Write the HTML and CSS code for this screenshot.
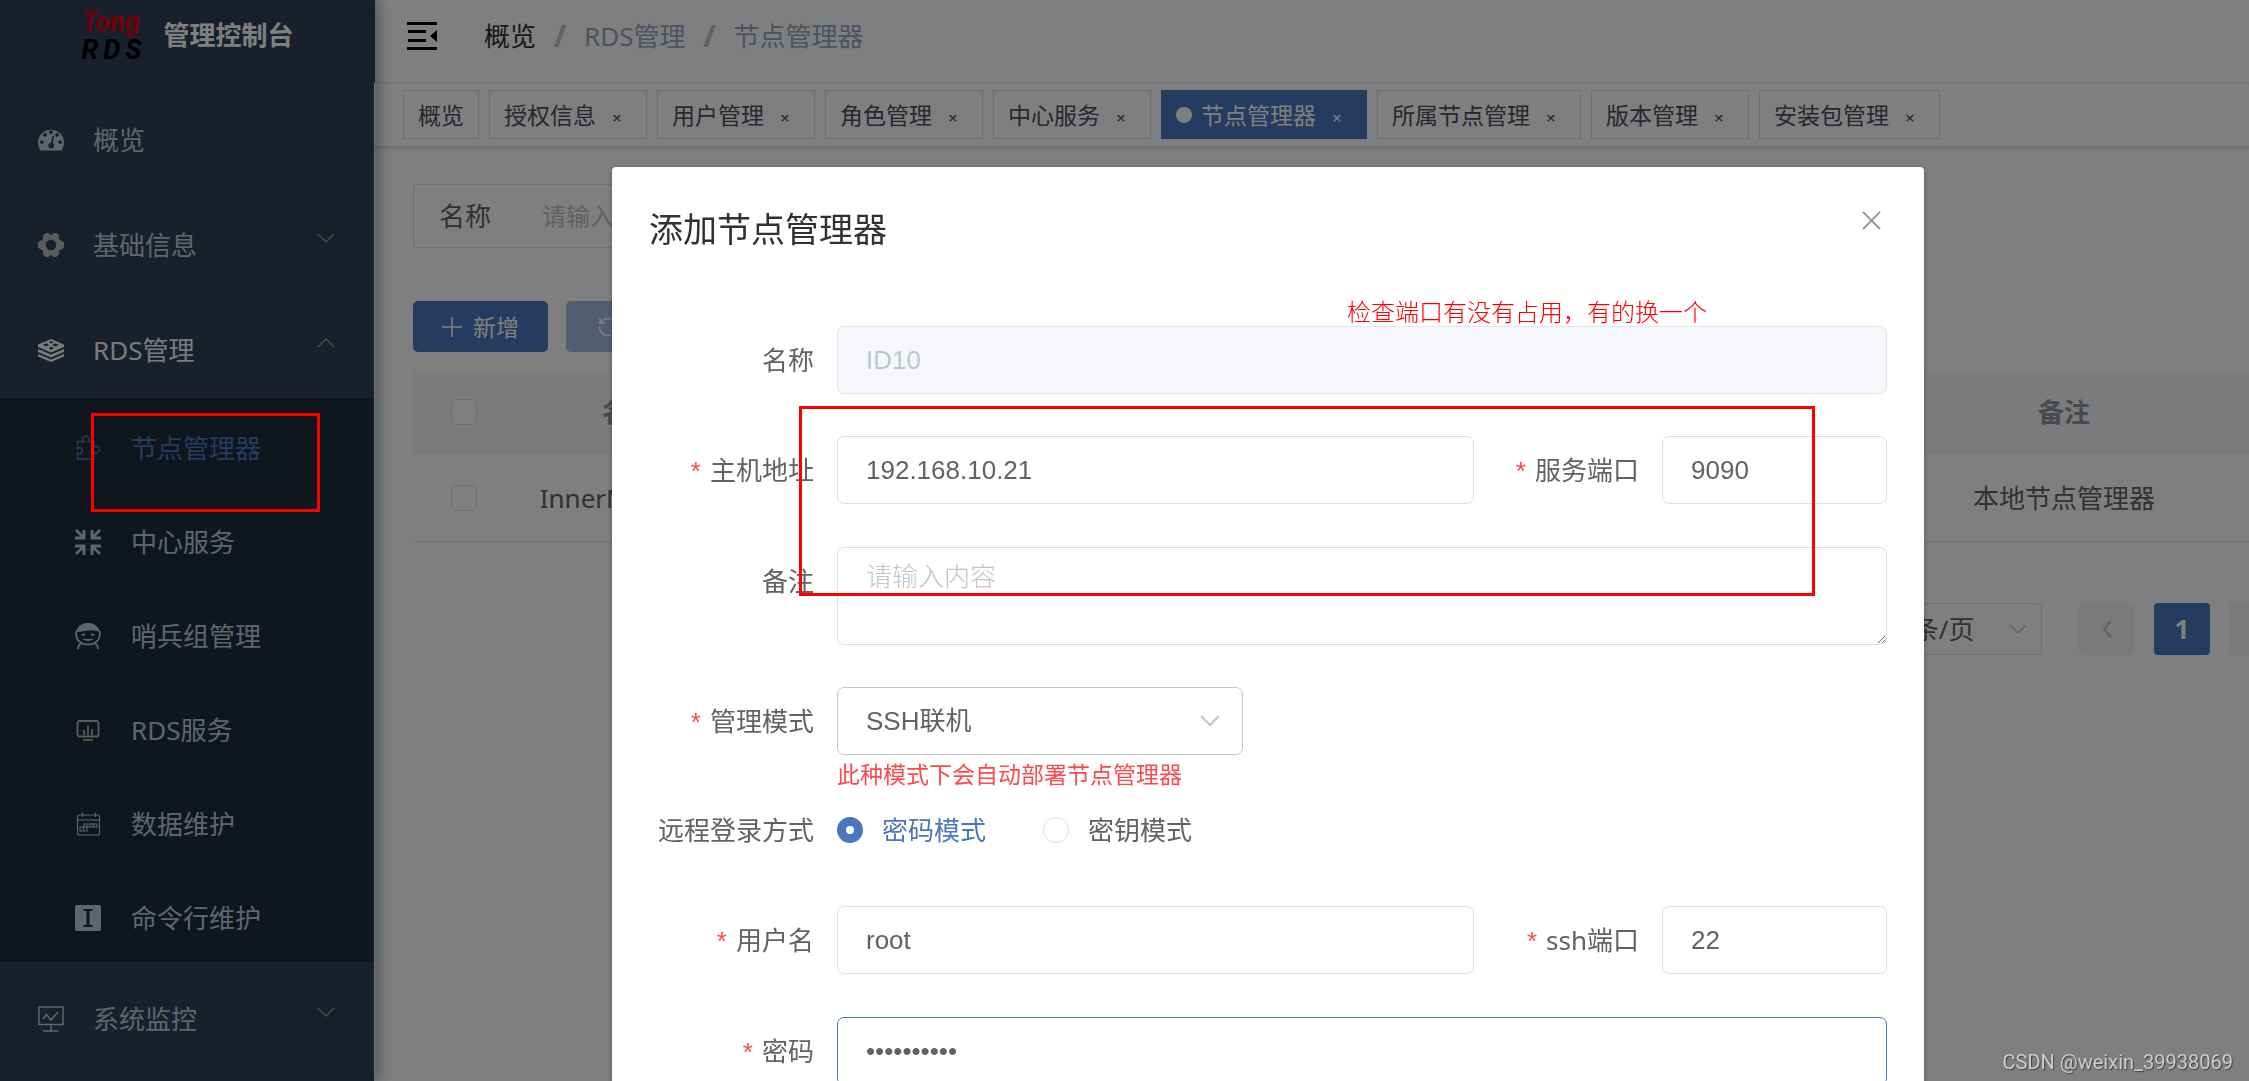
FILE: index.html
```html
<!DOCTYPE html>
<html lang="zh-CN">
<head>
<meta charset="utf-8">
<title>管理控制台 - 节点管理器</title>
<link rel="stylesheet" href="styles.css">
</head>
<body>
<div class="app">
  <aside class="sidebar">
    <div class="brand">
      <div class="logo"><span class="logo-top">Tong</span><span class="logo-bottom"><i>R</i><i>D</i><i>S</i></span></div>
      <h1 class="brand-title">管理控制台</h1>
    </div>
    <nav class="menu">
      <a class="menu-item" href="#">
        <svg class="icon" viewBox="0 0 26 26"><path fill="currentColor" fill-rule="evenodd" d="M2.600 23.500A13 13 0 1 1 23.400 23.500ZM13 3.200a1.900 1.900 0 1 0 .01 0ZM6.900 6a1.900 1.900 0 1 0 .01 0ZM19.100 6a1.900 1.900 0 1 0 .01 0ZM3.900 13.200a1.900 1.900 0 1 0 .01 0ZM22.100 13.200a1.900 1.900 0 1 0 .01 0ZM14.700 8.500l-1.800 7.200a3 3 0 1 0 2 .5l1.300-7.400Z"/></svg>
        <span class="menu-text">概览</span>
      </a>
      <a class="menu-item" href="#">
        <svg class="icon icon-gray" viewBox="0 0 26 26"><path fill="currentColor" stroke="currentColor" stroke-width="1" stroke-linejoin="round" fill-rule="evenodd" d="M7.500 1.500 10.500 1.500 13 3.500 15.500 1.500 18.500 1.500 20.500 3.500 20.700 7.500 25.500 10.500V15.500L20.700 18.500 20.500 22.500 18.500 24.500 15.500 24.500 13 22.500 10.500 24.500 7.500 24.500 5.500 22.500 5.300 18.500.5 15.500V10.500L5.300 7.500 5.500 3.500ZM13 7.300a5.700 5.700 0 1 0 .01 0Z"/></svg>
        <span class="menu-text">基础信息</span>
        <svg class="arrow" viewBox="0 0 18 10"><path d="M1 1 9 9 17 1"/></svg>
      </a>
      <a class="menu-item is-open" href="#">
        <svg class="icon" viewBox="0 0 26 26"><path fill="currentColor" fill-rule="evenodd" d="M13 2 26 7.500V10L13 15.500 0 10V7.500ZM12.500 4 11 5.600 13.500 6.400 15.800 5ZM8 6.600a2.600 1.200 0 1 0 .01 0ZM17 6.500l4 1.500-3.500 1.600-3.500-1.300ZM12 9.700l4.200 1-3 2-2-.8Z"/><path fill="currentColor" d="M0 12 13 17.500 26 12V15L13 20.500 0 15ZM0 17 13 22.500 26 17V19.500L13 25 0 19.500Z"/></svg>
        <span class="menu-text">RDS管理</span>
        <svg class="arrow" viewBox="0 0 18 10"><path d="M1 9 9 1 17 9"/></svg>
      </a>
      <div class="submenu">
        <a class="menu-item is-active" href="#">
          <svg class="icon" viewBox="0 0 26 26"><path fill="none" stroke="currentColor" stroke-width="1.400" d="M2.500 6.500H8.500a3.200 3.200 0 1 1 4.600 0H19V12a3.200 3.200 0 1 1 0 5V24H2.500V18a3 3 0 1 0 0-4.500Z"/></svg>
          <span class="menu-text">节点管理器</span>
        </a>
        <a class="menu-item" href="#">
          <svg class="icon" viewBox="0 0 26 26"><g fill="none" stroke="currentColor" stroke-width="2.800"><path d="M1 1 8 8M9 1V9H0M25 1 18 8M17 1V9H26M1 25 8 18M9 26V17H0M25 25 18 18M17 26V17H26"/></g></svg>
          <span class="menu-text">中心服务</span>
        </a>
        <a class="menu-item" href="#">
          <svg class="icon" viewBox="0 0 26 26"><path fill="currentColor" d="M1 9C3 2.500 7.500 0 13 0S23 2.500 25 9Q19 6.500 13 7.500T1 9Z"/><path fill="none" stroke="currentColor" stroke-width="1.800" d="M1.500 8C-.5 17 6 21.500 13 21.500S26.500 17 24.500 8M6 20.500Q3 22 3 26M20 20.500Q23 22 23 26M8.500 16Q13 18 17.500 16"/><path stroke="currentColor" stroke-width="2" d="M6.500 11.800H10M16 11.800H19.500"/></svg>
          <span class="menu-text">哨兵组管理</span>
        </a>
        <a class="menu-item" href="#">
          <svg class="icon icon-warm" viewBox="0 0 26 26"><rect x="2.500" y="4" width="21" height="15.500" rx="2" fill="none" stroke="currentColor" stroke-width="1.800"/><path stroke="currentColor" stroke-width="1.800" d="M9 18V13M13 18V9M17 18V12M8 22.800H18"/></svg>
          <span class="menu-text">RDS服务</span>
        </a>
        <a class="menu-item" href="#">
          <svg class="icon" viewBox="0 0 26 26"><g fill="none" stroke="currentColor" stroke-width="1.100"><rect x="2.500" y="4" width="22" height="20" rx="2"/><path d="M7.500 1.500V6M20.500 1.500V6M2.500 9H24.500M9 13H22V16H9ZM5 16H12V20H5ZM8.500 16V20M12 13V16M15 13V16M18.500 13V16"/></g></svg>
          <span class="menu-text">数据维护</span>
        </a>
        <a class="menu-item" href="#">
          <svg class="icon" viewBox="0 0 26 26"><path fill="currentColor" fill-rule="evenodd" d="M2 0H24Q26 0 26 2V24Q26 26 24 26H2Q0 26 0 24V2Q0 0 2 0ZM8.500 4V6H11.500V20H8.500V22H17.500V20H14.500V6H17.500V4Z"/></svg>
          <span class="menu-text">命令行维护</span>
        </a>
      </div>
      <a class="menu-item" href="#">
        <svg class="icon" viewBox="0 0 26 26"><path fill="none" stroke="currentColor" stroke-width="1.500" d="M1 1H25V18.500H1ZM13 18.500V24.500M5 25H20.500M5 13 8.500 8.500 13 14 20 6"/></svg>
        <span class="menu-text">系统监控</span>
        <svg class="arrow" viewBox="0 0 18 10"><path d="M1 1 9 9 17 1"/></svg>
      </a>
    </nav>
  </aside>

  <div class="main">
    <header class="navbar">
      <button class="fold" type="button" aria-label="收起菜单">
        <svg viewBox="0 0 30 28"><path fill="currentColor" d="M0 0H30V3H0ZM1 8H19V11H1ZM1 17H19V20H1ZM0 25H30V28H0ZM30 8V20L23 14Z"/></svg>
      </button>
      <nav class="breadcrumb">
        <a href="#">概览</a><span class="sep">/</span><span>RDS管理</span><span class="sep">/</span><span>节点管理器</span>
      </nav>
    </header>
    <div class="tags">
      <a class="tag" href="#">概览</a>
      <a class="tag" href="#">授权信息<span class="tag-close"></span></a>
      <a class="tag" href="#">用户管理<span class="tag-close"></span></a>
      <a class="tag" href="#">角色管理<span class="tag-close"></span></a>
      <a class="tag" href="#">中心服务<span class="tag-close"></span></a>
      <a class="tag is-current" href="#">节点管理器<span class="tag-close"></span></a>
      <a class="tag" href="#">所属节点管理<span class="tag-close"></span></a>
      <a class="tag" href="#">版本管理<span class="tag-close"></span></a>
      <a class="tag" href="#">安装包管理<span class="tag-close"></span></a>
    </div>
    <main class="page">
      <div class="search">
        <label for="q">名称</label>
        <input id="q" type="text" placeholder="请输入">
      </div>
      <div class="toolbar">
        <button class="btn" type="button"><svg viewBox="0 0 20 20"><path d="M10 0V20M0 10H20"/></svg>新增</button>
        <button class="btn is-disabled" type="button" disabled aria-label="刷新"><svg viewBox="0 0 20 20"><path d="M2 1V6H7M2.500 6A8.500 8.500 0 0 1 18 7M1.500 10A8.500 8.500 0 0 0 13 18M18 19V14H13"/></svg></button>
      </div>
      <table class="grid">
        <colgroup><col class="col-check"><col class="col-name"><col><col class="col-remark"></colgroup>
        <thead>
          <tr><th><input type="checkbox" aria-label="全选"></th><th>名称</th><th></th><th>备注</th></tr>
        </thead>
        <tbody>
          <tr><td><input type="checkbox" aria-label="选择此行"></td><td>InnerManager</td><td></td><td>本地节点管理器</td></tr>
        </tbody>
      </table>
      <div class="pager">
        <select class="page-size" aria-label="每页条数"><option>10条/页</option></select>
        <button class="page-btn" type="button" disabled aria-label="上一页"><svg viewBox="0 0 10 18"><path d="M9 1 2 9 9 17"/></svg></button>
        <button class="page-btn is-current" type="button">1</button>
        <button class="page-btn" type="button" disabled aria-label="下一页"><svg viewBox="0 0 10 18"><path d="M1 1 8 9 1 17"/></svg></button>
      </div>
    </main>
  </div>
</div>

<div class="overlay">
  <section class="dialog" role="dialog" aria-labelledby="dlg-title">
    <header class="dialog-head">
      <h2 id="dlg-title">添加节点管理器</h2>
      <button class="dialog-close" type="button" aria-label="关闭"><svg viewBox="0 0 20 20"><path d="M1 1 19 19M19 1 1 19"/></svg></button>
    </header>
    <form class="form">
      <div class="row">
        <label class="label" for="f-name">名称</label>
        <input class="field" id="f-name" type="text" value="ID10" disabled>
      </div>
      <div class="row">
        <label class="label required" for="f-host">主机地址</label>
        <input class="field" id="f-host" type="text" value="192.168.10.21">
        <label class="label required" for="f-port">服务端口</label>
        <input class="field is-short" id="f-port" type="text" value="9090">
      </div>
      <div class="row">
        <label class="label" for="f-remark">备注</label>
        <textarea class="field" id="f-remark" placeholder="请输入内容"></textarea>
      </div>
      <div class="row has-hint">
        <label class="label required" for="f-mode">管理模式</label>
        <select class="field is-select" id="f-mode"><option>SSH联机</option></select>
      </div>
      <p class="hint">此种模式下会自动部署节点管理器</p>
      <div class="row" role="radiogroup" aria-labelledby="l-login">
        <span class="label" id="l-login">远程登录方式</span>
        <label class="radio"><input type="radio" name="login" checked><span>密码模式</span></label>
        <label class="radio"><input type="radio" name="login"><span>密钥模式</span></label>
      </div>
      <div class="row">
        <label class="label required" for="f-user">用户名</label>
        <input class="field" id="f-user" type="text" value="root">
        <label class="label required" for="f-ssh">ssh端口</label>
        <input class="field is-short" id="f-ssh" type="text" value="22">
      </div>
      <div class="row">
        <label class="label required" for="f-pwd">密码</label>
        <input class="field is-focus" id="f-pwd" type="password" value="abcdefghij">
      </div>
    </form>
  </section>
</div>

<div class="mark mark-menu"></div>
<div class="mark mark-form"></div>
<p class="note">检查端口有没有占用，有的换一个</p>
<p class="watermark">CSDN @weixin_39938069</p>
</body>
</html>
```
FILE: styles.css
```css
* { box-sizing: border-box; }

body {
  margin: 0;
  height: 100vh;
  overflow: hidden;
  position: relative;
  background: #fff;
  color: #606266;
  font: 26px/36px "Noto Sans", "Noto Sans CJK SC", sans-serif;
}

a { color: inherit; text-decoration: none; }
h1, h2, p { margin: 0; }
button, input, select, textarea { font: inherit; color: inherit; margin: 0; }
button { border: 0; padding: 0; background: none; }
svg { display: block; flex: none; }

.app { display: flex; min-height: 100vh; }

/* sidebar */
.sidebar {
  flex: none;
  display: flex;
  flex-direction: column;
  width: 375px;
  background: #304156;
  color: #bfcbd9;
  position: relative;
  z-index: 1;
  box-shadow: 2px 0 14px rgba(0, 21, 41, .45);
}
.brand {
  flex: none;
  height: 83px;
  display: flex;
  justify-content: center;
  gap: 22px;
  padding: 8px 0 0;
}
.logo {
  width: 60px;
  font: italic bold 27px/28px Roboto, "Liberation Sans", sans-serif;
}
.logo span { display: flex; justify-content: space-between; }
.logo-top { color: #e60012; }
.logo-bottom { color: #000; }
.brand-title { font-size: 26px; line-height: 54px; color: #fff; }
.menu { flex: 1; border-right: 1px solid #e6e6e6; }
.menu-item {
  display: flex;
  align-items: center;
  gap: 29px;
  height: 105px;
  padding: 9px 39px 0 38px;
  background: #304156;
}
.icon { width: 26px; height: 26px; }
.icon-gray { color: #b8b8b8; }
.icon-warm { color: #bdb6ac; }
.menu-text { flex: 1; }
.is-open { color: #f4f4f5; }
.arrow {
  width: 18px;
  height: 10px;
  margin-bottom: 14px;
  fill: none;
  stroke: #909399;
  stroke-width: 1.500;
}
.submenu .menu-item {
  gap: 30px;
  height: 94px;
  padding: 6px 20px 0 75px;
  background: #1f2d3d;
}
.submenu .is-active { color: #4a77bf; }

/* top bars */
.main { flex: 1; min-width: 0; overflow: hidden; }
.navbar {
  height: 83px;
  display: flex;
  align-items: flex-start;
  gap: 47px;
  padding: 18px 32px 0;
}
.fold { padding: 4px 0; color: #000; }
.fold svg { width: 30px; height: 28px; }
.breadcrumb { display: flex; color: #97a8be; }
.breadcrumb a { color: #303133; }
.sep { width: 48px; text-align: center; font-size: 30px; font-weight: bold; color: #c0c4cc; }
.tags {
  display: flex;
  gap: 10px;
  height: 64px;
  padding: 6px 28px;
  border-top: 1px solid #f0f1f2;
  border-bottom: 1px solid #d8dce5;
  box-shadow: 0 1px 4px rgba(0, 0, 0, .2);
  font-size: 23px;
}
.tag {
  flex: none;
  display: flex;
  align-items: center;
  height: 49px;
  padding: 1px 14px 0;
  border: 1px solid #d8dce5;
  color: #495060;
  white-space: nowrap;
}
.tag-close { width: 36px; padding-left: 16px; }
.tag-close::before { content: "×"; font-size: 17px; line-height: 20px; }
.is-current { background: #4a77bf; border-color: #4a77bf; color: #fff; }
.tag.is-current::before {
  content: "";
  width: 16px;
  height: 16px;
  margin-right: 9px;
  border-radius: 50%;
  background: #fff;
}

/* page body */
.page { padding: 37px 0 0 38px; }
.search {
  display: flex;
  align-items: center;
  gap: 51px;
  width: 420px;
  height: 64px;
  padding-left: 25px;
  border: 1px solid #dcdfe6;
}
.search input {
  width: 260px;
  padding: 0;
  border: 0;
  background: none;
  font-size: 24px;
}
::placeholder { color: #c0c4cc; opacity: 1; }
.toolbar { display: flex; gap: 18px; margin: 53px 0 19px; }
.btn {
  display: flex;
  align-items: center;
  gap: 11px;
  height: 51px;
  padding: 0 29px;
  border-radius: 5px;
  background: #4a77bf;
  color: #fff;
  font-size: 23px;
}
.btn svg { width: 20px; height: 20px; fill: none; stroke: currentColor; stroke-width: 1.500; }
.btn.is-disabled { width: 135px; padding-left: 32px; background: #a4bbdf; }
.grid {
  width: 100%;
  table-layout: fixed;
  border-collapse: collapse;
  text-align: center;
}
.col-check { width: 102px; }
.col-name { width: 226px; }
.col-remark { width: 370px; }
.grid th, .grid td { padding: 2px 0 0; }
.grid th {
  height: 81px;
  background: #f5f7fa;
  border-bottom: 1px solid #ebeef5;
  color: #909399;
}
.grid td { height: 90px; border-bottom: 2px solid #ebeef5; }
.grid input {
  appearance: none;
  display: block;
  width: 26px;
  height: 26px;
  margin: 0 auto;
  border: 1px solid #dcdfe6;
  border-radius: 4px;
  background: #fff;
}
.pager {
  display: flex;
  justify-content: flex-end;
  gap: 19px;
  margin: 60px -36px 0 0;
}
.page-size {
  appearance: none;
  width: 180px;
  height: 52px;
  margin-right: 18px;
  padding: 0 20px;
  border: 1px solid #dcdfe6;
  border-radius: 5px;
  background: #fff url("data:image/svg+xml,%3Csvg xmlns='http://www.w3.org/2000/svg' width='18' height='10' fill='none' stroke='%23c0c4cc' stroke-width='1.500'%3E%3Cpath d='M1 1 9 9 17 1'/%3E%3C/svg%3E") no-repeat right 14px center;
}
.page-btn {
  display: flex;
  align-items: center;
  justify-content: center;
  width: 56px;
  height: 52px;
  border-radius: 4px;
  background: #f4f4f5;
  color: #c0c4cc;
  font-weight: bold;
}
.page-btn svg { width: 10px; height: 18px; fill: none; stroke: currentColor; stroke-width: 2; }
.page-btn.is-current { background: #4a77bf; color: #fff; }

/* dialog */
.overlay {
  position: fixed;
  inset: 0;
  z-index: 2;
  overflow: hidden;
  padding: 167px 325px 0 612px;
  background: rgba(0, 0, 0, .5);
}
.dialog {
  padding: 37px 37px 60px;
  border-radius: 4px;
  background: #fff;
  box-shadow: 0 1px 5px rgba(0, 0, 0, .3);
}
.dialog-head { display: flex; justify-content: space-between; align-items: flex-start; height: 122px; }
.dialog-head h2 { font-size: 34px; font-weight: normal; line-height: 50px; color: #303133; }
.dialog-close { padding: 7px 6px; color: #909399; }
.dialog-close svg { width: 19px; height: 19px; fill: none; stroke: currentColor; stroke-width: 2; }
.row { display: flex; min-height: 68px; margin-bottom: 42px; }
.has-hint { margin-bottom: 0; }
.label {
  flex: none;
  width: 188px;
  padding-right: 23px;
  text-align: right;
  line-height: 68px;
  white-space: nowrap;
}
.required::before { content: "*"; margin-right: 9px; color: #ff4949; font-family: "Liberation Sans", sans-serif; }
.field {
  flex: 1;
  min-width: 0;
  height: 68px;
  padding: 0 28px;
  border: 1px solid #dcdfe6;
  border-radius: 7px;
  outline: 0;
  background: #fff;
  font-family: "Liberation Sans", "Noto Sans CJK SC", sans-serif;
}
.field:disabled { background: #f5f7fa; border-color: #e4e7ed; color: #c0c4cc; }
.field.is-short { flex: none; width: 225px; }
.field.is-focus { border-color: #4a77bf; }
.field.is-select {
  appearance: none;
  flex: none;
  width: 406px;
  border-color: #c0c4cc;
  background: #fff url("data:image/svg+xml,%3Csvg xmlns='http://www.w3.org/2000/svg' width='20' height='12' fill='none' stroke='%23c0c4cc' stroke-width='2'%3E%3Cpath d='M1 1 10 10 19 1'/%3E%3C/svg%3E") no-repeat right 22px center;
}
textarea.field { display: block; height: 98px; padding: 11px 28px; font-weight: 300; }
.hint { margin-left: 188px; padding-bottom: 4px; font-size: 23px; line-height: 36px; color: #ff4949; }
.radio { display: flex; align-items: center; gap: 19px; margin-right: 57px; }
.radio input {
  appearance: none;
  width: 26px;
  height: 26px;
  border: 1px solid #dcdfe6;
  border-radius: 50%;
  background: #fff;
}
.radio input:checked { border: 9px solid #4a77bf; }
.radio input:checked + span { color: #4a77bf; }

/* annotations over the page */
.mark { position: absolute; z-index: 3; border: 3px solid #f00; pointer-events: none; }
.mark-menu { left: 91px; top: 413px; width: 229px; height: 99px; }
.mark-form { left: 799px; top: 406px; width: 1016px; height: 190px; }
.note {
  position: absolute;
  z-index: 3;
  left: 1347px;
  top: 294px;
  font-size: 24px;
  font-weight: 300;
  color: #f00;
}
.watermark {
  position: absolute;
  z-index: 3;
  right: 16px;
  bottom: 1px;
  font-family: Roboto, sans-serif;
  font-size: 20px;
  color: #ccc;
  text-shadow: 1px 1px 1px #444;
}
```
